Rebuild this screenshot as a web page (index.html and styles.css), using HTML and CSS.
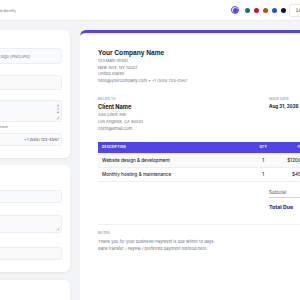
FILE: index.html
```html
<!DOCTYPE html>
<html lang="en">
<head>
<meta charset="utf-8">
<title>Invoice Generator</title>
<link rel="stylesheet" href="styles.css">
</head>
<body>
<div class="page">
  <header class="topbar">
    <div class="brand">
      <span class="brand-name">Invoice Generator</span>
      <span class="brand-sub">Customize colors to match your brand identify</span>
    </div>
    <div class="swatches">
      <span class="swatch sel"><span class="dot c-indigo"></span></span>
      <span class="swatch"><span class="dot c-teal"></span></span>
      <span class="swatch"><span class="dot c-rose"></span></span>
      <span class="swatch"><span class="dot c-amber"></span></span>
      <span class="swatch"><span class="dot c-blue"></span></span>
      <span class="swatch"><span class="dot c-dark"></span></span>
    </div>
    <button class="btn">Load</button>
  </header>

  <main class="layout">
    <aside class="sidebar">
      <section class="card card-company">
        <h2 class="card-title">Your Company</h2>
        <div class="file">
          <span class="file-btn">Choose File</span>
          <span class="file-text">Upload logo (PNG/JPG)</span>
        </div>
        <div class="input input-md">Your Company Name</div>
        <div class="textarea ta-lg">
          <span class="ta-text">123 Main Street</span>
          <svg class="ta-scroll" viewBox="0 0 4 10" width="4" height="10"><path d="M2 0.5 L3.4 2.3 H0.6 Z M2 9.5 L3.4 7.7 H0.6 Z" fill="#9ca3af"/><rect x="1.4" y="3.4" width="1.2" height="3.2" rx="0.6" fill="#c4c7cc"/></svg>
          <svg class="ta-grip" viewBox="0 0 4 4" width="4" height="4"><path d="M0.5 3.5 L3.5 0.5 M2 3.5 L3.5 2" stroke="#9ca3af" stroke-width="0.6"/></svg>
        </div>
        <div class="two-col">
          <div class="field">
            <label class="label">Email</label>
            <div class="input input-sm">hello@yourcompany.com</div>
          </div>
          <div class="field">
            <label class="label">Phone</label>
            <div class="input input-sm phone"><span class="cc">US</span><span class="phone-num">+1 (555) 123-4567</span></div>
          </div>
        </div>
      </section>

      <section class="card card-client">
        <h2 class="card-title">Bill To</h2>
        <div class="input input-sm first">Client Name</div>
        <label class="label gap">Address</label>
        <div class="textarea ta-md">
          <span class="ta-text">456 Client Ave</span>
          <svg class="ta-grip" viewBox="0 0 4 4" width="4" height="4"><path d="M0.5 3.5 L3.5 0.5 M2 3.5 L3.5 2" stroke="#9ca3af" stroke-width="0.6"/></svg>
        </div>
        <label class="label gap-lg">Email</label>
        <div class="input input-sm">client@email.com</div>
      </section>

      <section class="card card-items">
        <h2 class="card-title">Line Items</h2>
      </section>
    </aside>

    <article class="invoice">
      <div class="company">
        <h1 class="company-name">Your Company Name</h1>
        <p class="muted">123 Main Street</p>
        <p class="muted">New York, NY 10001</p>
        <p class="muted">United States</p>
        <p class="muted">hello@yourcompany.com • +1 (555) 123-4567</p>
      </div>

      <div class="meta">
        <div class="billed">
          <div class="cap">Billed To</div>
          <div class="client-name">Client Name</div>
          <p class="muted line7">456 Client Ave</p>
          <p class="muted line7">Los Angeles, CA 90001</p>
          <p class="muted line7">client@email.com</p>
        </div>
        <div class="dates">
          <div class="date">
            <div class="cap">Issue Date</div>
            <div class="date-val">Aug 31, 2026</div>
          </div>
          <div class="date">
            <div class="cap">Due Date</div>
            <div class="date-val">Sep 14, 2026</div>
          </div>
        </div>
      </div>

      <table class="items">
        <thead>
          <tr><th class="c-desc">Description</th><th class="c-qty">Qty</th><th class="c-price">Price</th><th class="c-amt">Amount</th></tr>
        </thead>
        <tbody>
          <tr class="alt"><td class="c-desc">Website design &amp; development</td><td class="c-qty">1</td><td class="c-price">$1200.00</td><td class="c-amt">$1200.00</td></tr>
          <tr><td class="c-desc">Monthly hosting &amp; maintenance</td><td class="c-qty">1</td><td class="c-price">$45.00</td><td class="c-amt">$45.00</td></tr>
        </tbody>
      </table>

      <div class="totals">
        <div class="t-row sub"><span>Subtotal</span><span>$1245.00</span></div>
        <div class="t-row due"><span>Total Due</span><span>$1245.00</span></div>
      </div>

      <div class="notes">
        <div class="cap">Notes</div>
        <p class="muted">Thank you for your business! Payment is due within 14 days.</p>
        <p class="muted">Bank transfer / PayPal / preferred payment method here.</p>
      </div>
    </article>
  </main>
</div>
</body>
</html>
```

FILE: styles.css
```css
* { box-sizing: border-box; }
html, body { margin: 0; padding: 0; }
body {
  width: 300px;
  height: 300px;
  overflow: hidden;
  background: #f3f4f6;
  font-family: Inter, "Noto Sans", "Liberation Sans", sans-serif;
  color: #111827;
}
p { margin: 0; }
h1, h2 { margin: 0; }

.page {
  margin-left: -120px;
  width: 480px;
}

/* top bar */
.topbar {
  height: 21px;
  background: #ffffff;
  border-bottom: 1px solid #eceef1;
  display: flex;
  align-items: center;
  padding: 0 46px 0 8px;
}
.brand {
  display: flex;
  align-items: baseline;
  gap: 6px;
  white-space: nowrap;
}
.brand-name { font-size: 5px; font-weight: 700; }
.brand-sub { font-size: 3.6px; color: #6b7280; }
.swatches {
  margin-left: auto;
  display: flex;
  align-items: center;
  gap: 3px;
}
.swatch {
  width: 6px;
  height: 6px;
  display: flex;
  align-items: center;
  justify-content: center;
}
.swatch.sel {
  width: 8px;
  height: 8px;
  border-radius: 50%;
  border: 1px solid #4f46e5;
  margin-right: 2px;
}
.dot { width: 5px; height: 5px; border-radius: 50%; display: block; }
.c-indigo { background: #4f46e5; }
.c-teal { background: #0f766e; }
.c-rose { background: #be123c; }
.c-amber { background: #b45309; }
.c-blue { background: #1d4ed8; }
.c-dark { background: #0f172a; }
.btn {
  margin-left: 3px;
  height: 13px;
  padding: 0 6px;
  font: 500 4.5px Inter, sans-serif;
  color: #374151;
  background: #fff;
  border: 1px solid #e5e7eb;
  border-radius: 3px;
}

/* layout */
.layout {
  display: grid;
  grid-template-columns: 190px 1fr;
  gap: 10px;
  padding-top: 9px;
}
.sidebar {
  display: flex;
  flex-direction: column;
  gap: 7px;
}
.card {
  background: #fff;
  border-radius: 6px;
  box-shadow: 0 1px 3px rgba(17, 24, 39, 0.07);
  padding: 8px 8px 12px;
}
.card-title {
  font-size: 5px;
  font-weight: 600;
  height: 10px;
}
.card-company { height: 128px; }
.card-client { height: 107px; }
.card-items { height: 60px; margin-top: 1px; }

.input, .file, .textarea {
  background: #f9fafb;
  border: 1px solid #eceef1;
  border-radius: 3px;
  font-size: 4.5px;
  color: #374151;
  display: flex;
  align-items: center;
  padding: 0 4px;
  white-space: nowrap;
}
.file { height: 16px; gap: 4px; }
.file-btn { width: 89px; color: transparent; }
.file-text { color: #6b7280; font-size: 4px; }
.input-md { height: 15px; margin-top: 11px; color: transparent; }
.input-sm { height: 13px; color: transparent; }
.input-sm.first { margin-top: 7px; }
.textarea {
  position: relative;
  align-items: flex-start;
  padding-top: 3px;
}
.ta-text { color: transparent; }
.ta-lg { height: 22px; margin-top: 10px; }
.ta-md { height: 18px; }
.ta-scroll { position: absolute; right: 1px; top: 3px; }
.ta-grip { position: absolute; right: 1px; bottom: 1px; }

.two-col {
  display: grid;
  grid-template-columns: 1fr 65px;
  gap: 6px;
  margin-top: 3px;
}
.label {
  display: block;
  font-size: 3.6px;
  line-height: 5px;
  height: 8px;
  color: #6b7280;
}
.label.gap { margin-top: 4px; }
.label.gap-lg { margin-top: 6px; }
.phone { padding: 0; }
.phone .cc { width: 26px; flex: none; color: transparent; }
.phone-num { color: #374151; font-size: 4px; }

/* invoice */
.invoice {
  background: #fff;
  border-top: 3px solid #4f46e5;
  border-radius: 6px 6px 0 0;
  padding: 15px 18px 20px;
  width: 290px;
  min-height: 300px;
}
.company-name {
  font-family: "Liberation Sans", Arial, sans-serif;
  font-size: 6.6px;
  font-weight: 700;
  line-height: 10px;
  color: #111827;
}
.muted {
  font-size: 4.1px;
  line-height: 6.67px;
  color: #6b7280;
}
.muted.line7 { line-height: 7px; }
.meta {
  margin-top: 11px;
  display: flex;
  justify-content: space-between;
}
.cap {
  font-size: 3.2px;
  line-height: 6px;
  letter-spacing: 0.2px;
  text-transform: uppercase;
  color: #6b7280;
}
.client-name {
  font-size: 5.6px;
  font-weight: 700;
  line-height: 8px;
  margin-top: 1px;
}
.dates { display: flex; gap: 6px; width: 83px; }
.date { width: 40px; }
.date-val { font-size: 4.6px; font-weight: 700; line-height: 8px; margin-top: 1px; }

.items {
  width: 100%;
  margin-top: 10px;
  border-collapse: collapse;
}
.items th {
  background: #4f46e5;
  color: #fff;
  font-size: 3.2px;
  font-weight: 700;
  letter-spacing: 0.2px;
  text-transform: uppercase;
  height: 11px;
  padding: 0 4px;
}
.items td {
  font-size: 4.6px;
  font-weight: 500;
  color: #1f2937;
  height: 14px;
  padding: 0 4px;
  border-bottom: 1px solid #eceef1;
}
.items tr.alt td { background: #fafafb; height: 15px; padding-top: 1px; }
.c-desc { text-align: left; }
.c-qty { text-align: center; width: 40px; }
.c-price { text-align: right; width: 25px; }
.c-amt { text-align: right; width: 40px; }

.totals {
  margin: 7px 0 0 auto;
  width: 83px;
}
.t-row {
  display: flex;
  justify-content: space-between;
  line-height: 8px;
}
.t-row.sub {
  font-size: 4.4px;
  color: #4b5563;
  border-bottom: 1px solid #d1d5db;
}
.t-row.due {
  padding-top: 5px;
  font-size: 5.2px;
  font-weight: 800;
  color: #3730a3;
}

.notes {
  margin-top: 13px;
  border-top: 1px solid #f0f1f3;
  padding-top: 5.5px;
}
.notes .cap { line-height: 5px; margin-bottom: 2px; }
.notes .muted { line-height: 7px; }
```
